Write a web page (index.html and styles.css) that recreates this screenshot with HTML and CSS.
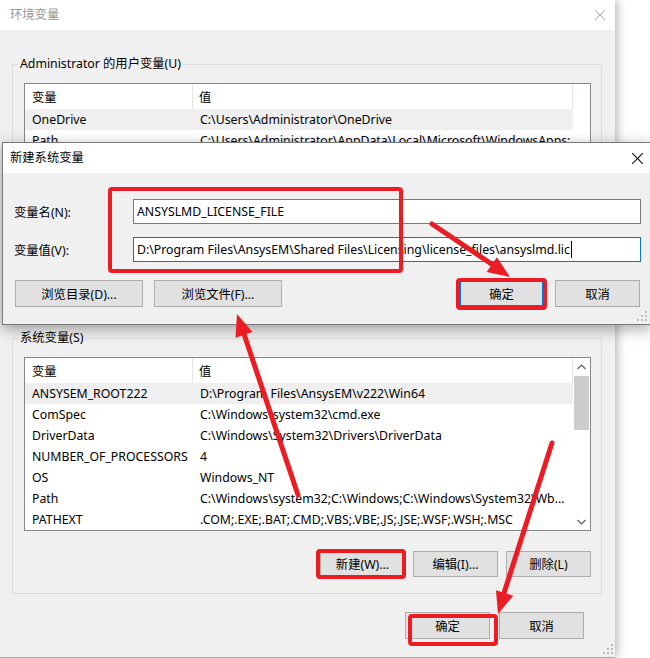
FILE: index.html
```html
<!DOCTYPE html>
<html lang="zh-CN">
<head>
    <meta charset="UTF-8">
    <meta name="viewport" content="width=device-width, initial-scale=1.0">
    <title>环境变量</title>
    <link rel="stylesheet" href="styles.css">
</head>
<body>

<div class="env-window">
    <div class="titlebar inactive">
        <span class="title">环境变量</span>
        <svg class="close" width="10" height="10" viewBox="0 0 10 10"><path d="M0 0L10 10M10 0L0 10" stroke="#a8a8a8" stroke-width="1" fill="none"/></svg>
    </div>
    <div class="env-body">
        <fieldset class="group group-user">
            <legend>Administrator 的用户变量(U)</legend>
            <div class="listview">
                <div class="lv-rows">
                    <div class="lv-head"><span class="c1">变量</span><span class="c2">值</span></div>
                    <div class="lv-row selected"><span class="c1">OneDrive</span><span class="c2">C:\Users\Administrator\OneDrive</span></div>
                    <div class="lv-row"><span class="c1">Path</span><span class="c2">C:\Users\Administrator\AppData\Local\Microsoft\WindowsApps;</span></div>
                </div>
                <div class="lv-blank"></div>
            </div>
        </fieldset>

        <fieldset class="group group-system">
            <legend>系统变量(S)</legend>
            <div class="listview">
                <div class="lv-rows">
                    <div class="lv-head"><span class="c1">变量</span><span class="c2">值</span></div>
                    <div class="lv-row selected"><span class="c1">ANSYSEM_ROOT222</span><span class="c2">D:\Program Files\AnsysEM\v222\Win64</span></div>
                    <div class="lv-row"><span class="c1">ComSpec</span><span class="c2">C:\Windows\system32\cmd.exe</span></div>
                    <div class="lv-row"><span class="c1">DriverData</span><span class="c2">C:\Windows\System32\Drivers\DriverData</span></div>
                    <div class="lv-row"><span class="c1">NUMBER_OF_PROCESSORS</span><span class="c2">4</span></div>
                    <div class="lv-row"><span class="c1">OS</span><span class="c2">Windows_NT</span></div>
                    <div class="lv-row"><span class="c1">Path</span><span class="c2">C:\Windows\system32;C:\Windows;C:\Windows\System32\Wb...</span></div>
                    <div class="lv-row"><span class="c1">PATHEXT</span><span class="c2">.COM;.EXE;.BAT;.CMD;.VBS;.VBE;.JS;.JSE;.WSF;.WSH;.MSC</span></div>
                </div>
                <div class="scrollbar">
                    <span class="sb-arrow"><svg width="9" height="6" viewBox="0 0 9 6"><path d="M0.5 5L4.5 1L8.5 5" stroke="#606060" stroke-width="1.2" fill="none"/></svg></span>
                    <div class="sb-track"><div class="sb-thumb"></div></div>
                    <span class="sb-arrow"><svg width="9" height="6" viewBox="0 0 9 6"><path d="M0.5 1L4.5 5L8.5 1" stroke="#606060" stroke-width="1.2" fill="none"/></svg></span>
                </div>
            </div>
            <div class="btn-row">
                <button class="btn">新建(W)...</button>
                <button class="btn">编辑(I)...</button>
                <button class="btn">删除(L)</button>
            </div>
        </fieldset>

        <div class="btn-row footer">
            <button class="btn">确定</button>
            <button class="btn">取消</button>
        </div>
    </div>
    <svg class="grip" width="10" height="10" viewBox="0 0 10 10" fill="#bdbdbd">
        <rect x="8" y="0" width="2" height="2"/><rect x="4" y="4" width="2" height="2"/><rect x="8" y="4" width="2" height="2"/>
        <rect x="0" y="8" width="2" height="2"/><rect x="4" y="8" width="2" height="2"/><rect x="8" y="8" width="2" height="2"/>
    </svg>
</div>

<div class="dialog">
    <div class="titlebar">
        <span class="title">新建系统变量</span>
        <svg class="close" width="11" height="11" viewBox="0 0 11 11"><path d="M0 0L11 11M11 0L0 11" stroke="#111" stroke-width="1.1" fill="none"/></svg>
    </div>
    <div class="dialog-body">
        <div class="form">
            <label class="form-label">变量名(N):</label>
            <div class="textbox">ANSYSLMD_LICENSE_FILE</div>
            <label class="form-label">变量值(V):</label>
            <div class="textbox focused">D:\Program Files\AnsysEM\Shared Files\Licensing\license_files\ansyslmd.lic<span class="caret"></span></div>
        </div>
        <div class="btn-row dialog-buttons">
            <button class="btn wide">浏览目录(D)...</button>
            <button class="btn wide">浏览文件(F)...</button>
            <button class="btn default push">确定</button>
            <button class="btn">取消</button>
        </div>
    </div>
    <svg class="grip" width="10" height="10" viewBox="0 0 10 10" fill="#bdbdbd">
        <rect x="8" y="0" width="2" height="2"/><rect x="4" y="4" width="2" height="2"/><rect x="8" y="4" width="2" height="2"/>
        <rect x="0" y="8" width="2" height="2"/><rect x="4" y="8" width="2" height="2"/><rect x="8" y="8" width="2" height="2"/>
    </svg>
</div>

<!-- красные пометки поверх скриншота -->
<svg class="annotations" width="650" height="658" viewBox="0 0 650 658">
    <g fill="none" stroke="#ec1c24" stroke-width="4">
        <rect x="110" y="189" width="291" height="82" rx="2"/>
        <rect x="458" y="280" width="87" height="28" rx="2"/>
        <rect x="318" y="551" width="86" height="26" rx="2"/>
        <rect x="410" y="616" width="86" height="28" rx="2"/>
    </g>
    <g stroke="#ec1c24" stroke-width="5" stroke-linecap="round">
        <line x1="432" y1="224" x2="493" y2="265"/>
        <line x1="298" y1="495" x2="244" y2="334"/>
        <line x1="552" y1="443" x2="504" y2="593"/>
    </g>
    <g fill="#ec1c24">
        <polygon points="510,277 496.9,257.2 486.7,272.0"/>
        <polygon points="237,314 252.5,332.0 235.5,337.8"/>
        <polygon points="498,614 513.2,595.7 496.0,590.3"/>
    </g>
</svg>

</body>
</html>
```

FILE: styles.css
```css
* {
    box-sizing: border-box;
}
body {
    margin: 0;
    width: 650px;
    height: 658px;
    overflow: hidden;
    position: relative;
    background-color: #fff;
    font-family: "Noto Sans", "Noto Sans CJK SC", sans-serif;
    font-size: 12.3px;
    color: #000;
}
.env-window {
    width: 615px;
    height: 658px;
    background-color: #f0f0f0;
    border-bottom: 1px solid #a8a8a8;
    box-shadow: 2px 0 9px rgba(0, 0, 0, 0.3);
    position: relative;
}
.titlebar {
    height: 30px;
    background-color: #fff;
    display: flex;
    align-items: center;
    justify-content: space-between;
    padding: 0 10px 0 10px;
}
.titlebar .title {
    line-height: 16px;
}
.titlebar.inactive .title {
    color: #999;
}
.env-body {
    padding: 26px 12px 0 12px;
}
.group {
    margin: 0;
    width: 590px;
    border: 1px solid #dcdcdc;
    padding: 11px 10px 16px 11px;
}
.group legend {
    padding: 0 2px;
    margin-left: -6px;
    line-height: 16px;
}
.group-user {
    height: 264px;
    margin-bottom: 10px;
    overflow: hidden;
}
.listview {
    display: grid;
    grid-template-columns: 1fr 17px;
    height: 174px;
    border: 1px solid #828790;
    background-color: #fff;
    overflow: hidden;
}
.lv-rows {
    overflow: hidden;
}
.lv-head,
.lv-row {
    display: flex;
    align-items: center;
    white-space: nowrap;
}
.lv-head {
    height: 25px;
}
.lv-row {
    height: 21px;
}
.lv-row.selected {
    background-color: #efefef;
}
.c1 {
    width: 168px;
    flex: none;
    padding-left: 7px;
    overflow: hidden;
}
.c2 {
    flex: 1;
    padding-left: 7px;
    overflow: hidden;
}
.lv-head .c1,
.lv-head .c2 {
    height: 100%;
    display: flex;
    align-items: center;
    border-right: 1px solid #e5e5e5;
}
.lv-head .c2 {
    padding-left: 6px;
}
.scrollbar {
    display: flex;
    flex-direction: column;
    background-color: #fff;
}
.sb-arrow {
    height: 17px;
    display: flex;
    align-items: center;
    justify-content: center;
    flex: none;
}
.sb-track {
    flex: 1;
}
.sb-thumb {
    margin: 1px 1px 0 1px;
    height: 54px;
    background-color: #cdcdcd;
}
.btn-row {
    display: flex;
    justify-content: flex-end;
    gap: 8px;
    margin-top: 20px;
}
.btn {
    width: 85px;
    height: 26px;
    padding: 0;
    font-family: inherit;
    font-size: 12.3px;
    color: #000;
    background-color: #e1e1e1;
    border: 1px solid #adadad;
}
.btn.default {
    border: 2px solid #0078d7;
}
.footer {
    margin-top: 18px;
    gap: 9px;
    padding-right: 19px;
}
.footer .btn {
    height: 27px;
}
.grip {
    position: absolute;
    right: 2px;
    bottom: 3px;
}
.dialog {
    position: absolute;
    left: 2px;
    top: 142px;
    width: 650px;
    height: 183px;
    background-color: #f0f0f0;
    border: 1px solid #7a7a7a;
    box-shadow: 0 4px 14px rgba(0, 0, 0, 0.35);
}
.dialog .titlebar {
    padding: 0 8px 0 7px;
}
.dialog .grip {
    right: 4px;
}
.dialog-body {
    padding: 26px 10px 0 11px;
}
.form {
    display: grid;
    grid-template-columns: 119px 1fr;
    row-gap: 13px;
    align-items: center;
}
.textbox {
    height: 25px;
    display: flex;
    align-items: center;
    padding-left: 3px;
    white-space: nowrap;
    overflow: hidden;
    background-color: #fff;
    border: 1px solid #7a7a7a;
}
.textbox.focused {
    border-color: #0078d7;
}
.caret {
    display: inline-block;
    width: 1px;
    height: 17px;
    margin-left: 1px;
    background-color: #000;
}
.dialog-buttons {
    justify-content: flex-start;
    gap: 11px;
    margin-top: 18px;
    padding-left: 1px;
    padding-right: 1px;
}
.dialog-buttons .btn {
    height: 27px;
}
.dialog-buttons .wide {
    width: 128px;
}
.dialog-buttons .push {
    margin-left: auto;
}
.annotations {
    position: absolute;
    left: 0;
    top: 0;
    pointer-events: none;
}
```
